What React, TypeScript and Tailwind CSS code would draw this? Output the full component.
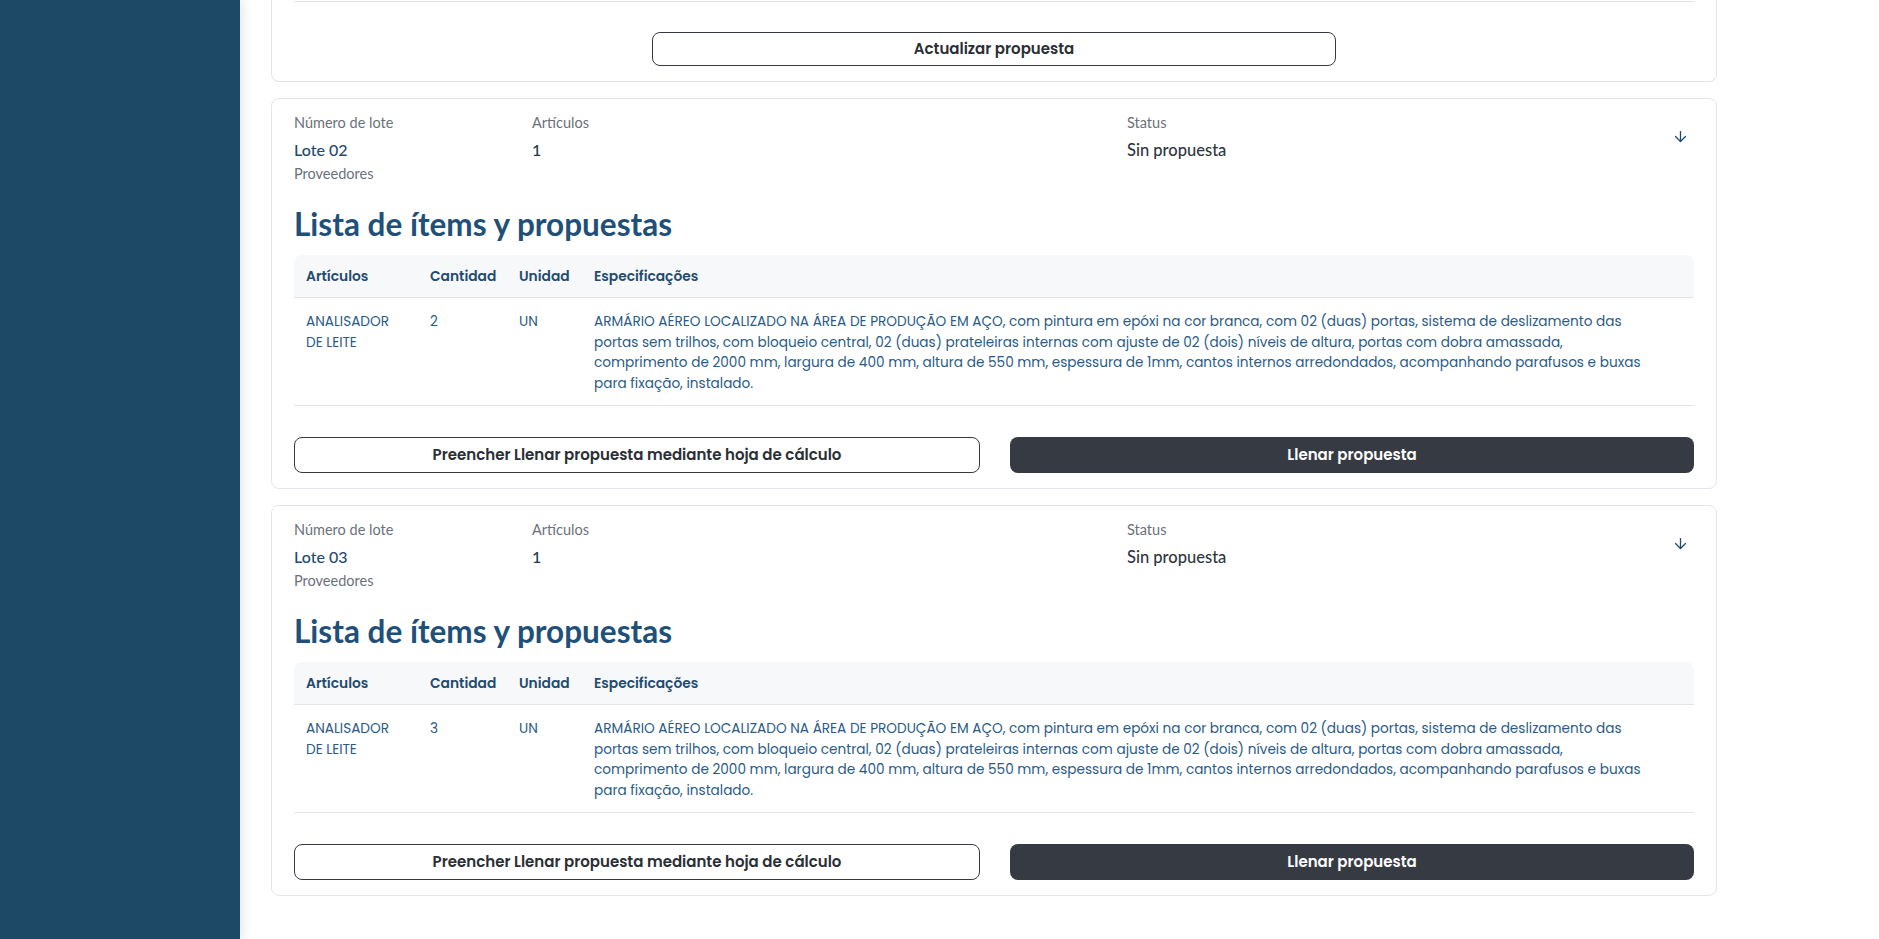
import React from "react";
import { ArrowDown } from "lucide-react";

const specLines = [
  "ARMÁRIO AÉREO LOCALIZADO NA ÁREA DE PRODUÇÃO EM AÇO, com pintura em epóxi na cor branca, com 02 (duas) portas, sistema de deslizamento das",
  "portas sem trilhos, com bloqueio central, 02 (duas) prateleiras internas com ajuste de 02 (dois) níveis de altura, portas com dobra amassada,",
  "comprimento de 2000 mm, largura de 400 mm, altura de 550 mm, espessura de 1mm, cantos internos arredondados, acompanhando parafusos e buxas",
  "para fixação, instalado.",
];

function LoteCard({ lote, qty }: { lote: string; qty: string }) {
  return (
    <div className="rounded-lg border border-[#e3e5ea] bg-white px-[22px] pt-[15px] pb-[15px]">
      <div className="flex [font-family:Lato,sans-serif]">
        <div className="w-[238px] shrink-0">
          <div className="text-[14.5px] leading-[18px] text-[#6b717b]">Número de lote</div>
          <div className="mt-[7px] text-[16px] leading-[22px] font-medium text-[#1f4b6e]">{lote}</div>
          <div className="mt-[4px] text-[14.5px] leading-[18px] text-[#6b717b]">Proveedores</div>
        </div>
        <div className="w-[595px] shrink-0">
          <div className="text-[14.5px] leading-[18px] text-[#6b717b]">Artículos</div>
          <div className="mt-[7px] text-[16px] leading-[22px] font-medium text-[#24384f]">1</div>
        </div>
        <div className="flex-1">
          <div className="text-[14.5px] leading-[18px] text-[#6b717b]">Status</div>
          <div className="mt-[7px] text-[16.5px] leading-[22px] font-medium text-[#2f3540]">Sin propuesta</div>
        </div>
        <div className="mr-[5px] mt-[14px]">
          <ArrowDown size={17} strokeWidth={1.8} className="text-[#1f4b6e]" />
        </div>
      </div>

      <h2 className="mt-[23px] text-[31.5px] leading-[36px] font-bold text-[#1f5079] [font-family:Lato,sans-serif]">
        Lista de ítems y propuestas
      </h2>

      <div className="mt-[13px] [font-family:Poppins,Inter,sans-serif]">
        <div className="flex h-[43px] items-center rounded-t-lg bg-[#f7f8fa] border-b border-[#e2e4e8] pt-[2px] text-[13.8px] font-semibold text-[#1f4b6e]">
          <div className="w-[124px] shrink-0 pl-[12px]">Artículos</div>
          <div className="w-[89px] shrink-0 pl-[12px]">Cantidad</div>
          <div className="w-[75px] shrink-0 pl-[12px]">Unidad</div>
          <div className="flex-1 pl-[12px]">Especificações</div>
        </div>
        <div className="flex border-b border-[#e2e4e8] pt-[14px] pb-[11px] text-[13.63px] leading-[20.5px] text-[#2a5b87]">
          <div className="w-[124px] shrink-0 pl-[12px]">
            ANALISADOR
            <br />
            DE LEITE
          </div>
          <div className="w-[89px] shrink-0 pl-[12px]">{qty}</div>
          <div className="w-[75px] shrink-0 pl-[12px]">UN</div>
          <div className="flex-1 pl-[12px] whitespace-nowrap">
            {specLines.map((l, i) => (
              <div key={i}>{l}</div>
            ))}
          </div>
        </div>
      </div>

      <div className="mt-[31px] flex gap-[30px] [font-family:Poppins,Inter,sans-serif]">
        <button className="flex h-[36px] flex-1 items-center justify-center rounded-lg border border-[#363a42] bg-white text-[15px] font-semibold text-[#2b2f36]">
          Preencher Llenar propuesta mediante hoja de cálculo
        </button>
        <button className="flex h-[36px] flex-1 items-center justify-center rounded-lg bg-[#363a42] text-[15px] font-semibold text-white">
          Llenar propuesta
        </button>
      </div>
    </div>
  );
}

export default function App() {
  return (
    <div className="flex min-h-[939px] bg-white [font-family:Lato,sans-serif]">
      <aside className="relative z-10 w-[240px] shrink-0 bg-[#1d4966] shadow-[3px_0_10px_rgba(0,0,0,0.10)]" />
      <main className="flex-1 pl-[31px]">
        <div className="flex w-[1446px] flex-col gap-[16px]">
          <div className="rounded-b-lg border-x border-b border-[#e3e5ea] bg-white px-[22px] pb-[15px]">
            <div className="mt-[1px] border-t border-[#e2e4e8]" />
            <div className="mt-[30px] flex justify-center [font-family:Poppins,Inter,sans-serif]">
              <button className="flex h-[34px] w-[684px] items-center justify-center rounded-lg border border-[#363a42] bg-white text-[15px] font-semibold text-[#2b2f36]">
                Actualizar propuesta
              </button>
            </div>
          </div>
          <LoteCard lote="Lote 02" qty="2" />
          <LoteCard lote="Lote 03" qty="3" />
        </div>
      </main>
    </div>
  );
}
